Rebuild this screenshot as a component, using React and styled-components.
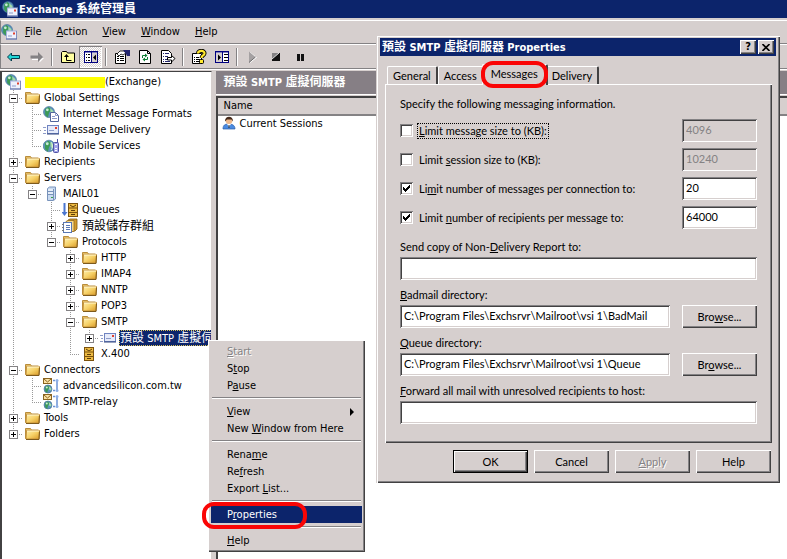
import React, { useState } from "react";
import styled, { createGlobalStyle, css } from "styled-components";

const face = "#d6cfce";
const shadow = "#848284";
const dark = "#424142";
const navy = "#0c246b";
const uiFont = '"DejaVu Sans Condensed", "Noto Sans", "Noto Sans CJK TC", sans-serif';
const dialogFont = 'Lato, "Liberation Sans", "Noto Sans CJK TC", sans-serif';

const GlobalStyle = createGlobalStyle`
  * {
    box-sizing: border-box;
  }

  body {
    margin: 0;
    overflow: hidden;
    font-family: ${uiFont};
    font-size: 11px;
    line-height: 16px;
    color: #000;
    background: #fff;
  }

  button, input {
    font: inherit;
    color: inherit;
    margin: 0;
    padding: 0;
    border: 0;
    border-radius: 0;
    background: none;
  }

  ul {
    list-style: none;
    margin: 0;
    padding: 0;
  }
`;

const raised = css`
  box-shadow: inset 1px 1px #fff, inset -1px -1px ${dark}, inset -2px -2px ${shadow};
`;

const sunken = css`
  box-shadow: inset 1px 1px ${shadow}, inset -1px -1px #fff, inset 2px 2px ${dark},
    inset -2px -2px ${face};
`;

/* ---------- main window ---------- */

const Window = styled.div`
  position: relative;
  display: flex;
  flex-direction: column;
  height: 100vh;
  background: ${face};
`;

const TitleBar = styled.header`
  display: flex;
  align-items: center;
  gap: 1px;
  height: 18px;
  padding-left: 2px;
  color: #fff;
  font-weight: bold;
  white-space: nowrap;
  background: ${navy};
`;

const MenuBar = styled.nav`
  display: flex;
  align-items: center;
  gap: 1px;
  height: 24px;
  margin-top: 2px;
  border-top: 1px solid #fff;
  border-left: 1px solid ${shadow};
  border-bottom: 1px solid ${shadow};
`;

const MenuButton = styled.button`
  height: 20px;
  padding: 0 7px;
`;

const ToolBar = styled.div`
  display: flex;
  align-items: center;
  height: 25px;
  padding-left: 1px;
  border-top: 1px solid #fff;
  border-left: 1px solid ${shadow};
  border-bottom: 1px solid ${shadow};
`;

const ToolButton = styled.button`
  display: flex;
  align-items: center;
  justify-content: center;
  width: 23px;
  height: 22px;
  ${(props) =>
    props.$pressed &&
    css`
      background: repeating-conic-gradient(#fff 0 25%, ${face} 0 50%) 0 0 / 2px 2px;
      box-shadow: inset 1px 1px ${shadow}, inset -1px -1px #fff;
    `}
`;

const ToolDivider = styled.span`
  width: 2px;
  height: 18px;
  margin: 0 3px;
  border-left: 1px solid ${shadow};
  border-right: 1px solid #fff;
`;

const Panes = styled.main`
  flex: 1;
  display: grid;
  grid-template-columns: 27% 1fr;
  gap: 4px;
  min-height: 0;
  padding-top: 1px;
  border-top: 1px solid #fff;
`;

const Han = styled.span`
  font-size: 12px;
`;

/* ---------- tree ---------- */

const TreePane = styled.div`
  overflow: hidden;
  padding: 2px 1px 0 2px;
  background: #fff;
  border-left: 2px solid ${dark};
  border-top: 1px solid ${dark};
  border-right: 1px solid ${face};
`;

const Row = styled.div`
  display: flex;
  height: 16px;
  white-space: nowrap;
`;

const vertical = "repeating-linear-gradient(#999 0 1px, transparent 1px 2px)";
const horizontal = "repeating-linear-gradient(to right, #999 0 1px, transparent 1px 2px)";
const guides = {
  blank: "none",
  line: `${vertical} 9px 0 / 1px 100% no-repeat`,
  tee: `${vertical} 9px 0 / 1px 100% no-repeat, ${horizontal} 9px 8px / 10px 1px no-repeat`,
  end: `${vertical} 9px 0 / 1px 8px no-repeat, ${horizontal} 9px 8px / 10px 1px no-repeat`,
};

const Guide = styled.span`
  flex: none;
  width: 19px;
  height: 16px;
  padding: 4px 5px;
  background: ${(props) => guides[props.$kind]};
`;

const Expander = styled.button`
  display: block;
  width: 9px;
  height: 9px;
  border: 1px solid ${shadow};
  background: ${(props) =>
      props.$open ? "none" : "linear-gradient(#000, #000) 3px 1px / 1px 5px no-repeat"},
    linear-gradient(#000, #000) 1px 3px / 5px 1px no-repeat, #fff;
`;

const NodeIcon = styled.span`
  display: flex;
  flex: none;
  width: 18px;
  padding-left: 1px;
`;

const NodeLabel = styled.span`
  padding: 0 1px;
  margin-left: 2px;
  ${(props) =>
    props.$selected &&
    css`
      color: #fff;
      background: ${navy};
      outline: 1px dotted #d9c25a;
      outline-offset: -1px;
    `}
`;

const Redacted = styled.span`
  display: inline-block;
  width: 80px;
  height: 11px;
  vertical-align: middle;
  background: #ff0;
`;

/* ---------- result list ---------- */

const ResultPane = styled.section`
  display: flex;
  flex-direction: column;
  overflow: hidden;
`;

const ResultTitle = styled.h1`
  height: 24px;
  margin: 0;
  padding-left: 7px;
  font-size: 11px;
  line-height: 23px;
  color: #fff;
  background: #867f85;
  border-bottom: 1px solid #fff;
`;

const ListArea = styled.div`
  flex: 1;
  margin-top: 1px;
  background: #fff;
  border-top: 2px solid ${dark};
  border-left: 2px solid ${dark};
`;

const ListTable = styled.table`
  width: 100%;
  border-collapse: collapse;

  th {
    height: 17px;
    padding: 0 5px;
    font-weight: normal;
    text-align: left;
    background: ${face};
    border-bottom: 2px solid ${shadow};
  }

  td {
    padding: 0 4px;
  }
`;

const CellContent = styled.span`
  display: flex;
  gap: 1px;
`;

/* ---------- context menu ---------- */

const ContextMenu = styled.div`
  position: absolute;
  left: 208px;
  top: 340px;
  width: 157px;
  padding: 3px;
  background: ${face};
  ${raised}
`;

const MenuItem = styled.button`
  display: flex;
  align-items: center;
  justify-content: space-between;
  width: 100%;
  height: 17px;
  padding: 0 8px 0 16px;
  white-space: nowrap;

  &:disabled {
    color: ${shadow};
    text-shadow: 1px 1px #fff;
  }

  ${(props) =>
    props.$active &&
    css`
      color: #fff;
      background: ${navy};
    `}
`;

const MenuLine = styled.hr`
  height: 2px;
  margin: 3px 1px 4px;
  border: 0;
  border-top: 1px solid ${shadow};
  border-bottom: 1px solid #fff;
`;

const Ring = styled.span`
  position: absolute;
  left: ${(props) => props.$left}px;
  top: ${(props) => props.$top}px;
  width: ${(props) => props.$width}px;
  height: 27px;
  border: 4px solid #fa0505;
  border-radius: 12px;
  pointer-events: none;
  z-index: 3;
`;

/* ---------- dialog ---------- */

const Dialog = styled.form`
  position: absolute;
  left: 376px;
  top: 35px;
  width: 404px;
  padding: 3px 4px 10px;
  font-family: ${dialogFont};
  line-height: 14px;
  background: ${face};
  box-shadow: inset 1px 1px ${face}, inset 2px 2px #fff, inset -1px -1px ${dark},
    inset -2px -2px ${shadow};
`;

const DialogTitle = styled.div`
  display: flex;
  align-items: center;
  height: 18px;
  padding: 0 2px;
  font-family: ${uiFont};
  font-weight: bold;
  color: #fff;
  background: ${navy};
`;

const DialogName = styled.span`
  flex: 1;
`;

const CaptionButton = styled.button`
  display: flex;
  align-items: center;
  justify-content: center;
  width: 16px;
  height: 14px;
  margin-left: 2px;
  color: #000;
  background: ${face};
  ${raised}
`;

const Tabs = styled.div`
  display: flex;
  align-items: flex-end;
  height: 28px;
  padding: 0 7px;
`;

const Tab = styled.button`
  position: relative;
  height: 18px;
  padding: 0 5px;
  background: ${face};
  border-top: 1px solid #fff;
  border-left: 1px solid #fff;
  border-right: 2px solid ${dark};
  border-radius: 2px 2px 0 0;

  ${(props) =>
    props.$selected &&
    css`
      height: 21px;
      margin: 0 -2px -1px;
      padding: 0 8px 3px;
      z-index: 1;
    `}
`;

const TabBody = styled.div`
  margin: 0 4px 7px 5px;
  padding: 13px 15px 19px;
  ${raised}
`;

const Intro = styled.p`
  margin: 0 0 8px;
`;

const LimitRow = styled.div`
  display: flex;
  align-items: center;
  margin-bottom: 6px;
`;

const CheckBox = styled.input`
  appearance: none;
  flex: none;
  width: 13px;
  height: 13px;
  padding: 3px;
  background: #fff;
  ${sunken}

  &:checked::before {
    content: "";
    display: block;
    width: 7px;
    height: 7px;
    background: #000;
    clip-path: polygon(
      0 2px, 1px 2px, 1px 3px, 2px 3px, 2px 4px, 3px 4px, 3px 3px, 4px 3px, 4px 2px, 5px 2px,
      5px 1px, 6px 1px, 6px 0, 7px 0, 7px 3px, 6px 3px, 6px 4px, 5px 4px, 5px 5px, 4px 5px,
      4px 6px, 3px 6px, 3px 7px, 2px 7px, 2px 6px, 1px 6px, 1px 5px, 0 5px
    );
  }
`;

const LimitLabel = styled.label`
  margin-left: 4px;
  padding: 0 1px;
  border: 1px ${(props) => (props.$focused ? "dotted #000" : "solid transparent")};
`;

const TextBox = styled.input`
  flex: 1;
  width: 100%;
  min-width: 0;
  height: 23px;
  padding: 0 4px 3px;
  background: #fff;
  ${sunken}

  &:disabled {
    color: ${shadow};
    background: ${face};
  }
`;

const NumberBox = styled(TextBox)`
  flex: none;
  width: 75px;
  margin-left: auto;
`;

const Field = styled.div`
  margin-top: 8px;

  label {
    display: block;
    margin-bottom: 3px;
  }
`;

const Fields = styled.div`
  margin-top: 11px;
`;

const FieldRow = styled.div`
  display: flex;
  gap: 12px;
`;

const PushButton = styled.button`
  width: 75px;
  height: 23px;
  background: ${face};
  ${raised}

  ${(props) =>
    props.$primary &&
    css`
      border: 1px solid #000;
    `}

  &:disabled {
    color: ${shadow};
    text-shadow: 1px 1px #fff;
  }
`;

const DialogButtons = styled.div`
  display: flex;
  justify-content: flex-end;
  gap: 6px;
  padding-right: 5px;
`;

/* ---------- icons ---------- */

const Svg = ({ children }) => (
  <svg width="16" height="16" viewBox="0 0 16 16" aria-hidden="true">
    {children}
  </svg>
);

const Globe = ({ cx, cy, r }) => (
  <g>
    <circle cx={cx} cy={cy} r={r} fill="#5d93bd" stroke="#3d6b8f" strokeWidth=".6" />
    <path
      d={`M${cx - r * 0.7} ${cy - r * 0.5}l${r * 0.6}-${r * 0.4} ${r * 0.5} ${r * 0.4}-${r * 0.4} ${r * 0.7}-${r * 0.2} ${r * 0.8}-${r * 0.5}-${r * 0.5}z`}
      fill="#3c9a56"
    />
    <path
      d={`M${cx + r * 0.2} ${cy - r * 0.7}l${r * 0.6} ${r * 0.5}v${r * 0.6}l-${r * 0.5}-${r * 0.2}z`}
      fill="#a4dca8"
    />
    <circle cx={cx - r * 0.3} cy={cy - r * 0.4} r={r * 0.25} fill="#c9ecd8" />
  </g>
);

const Envelope = ({ x, y }) => (
  <g>
    <rect x={x + 0.5} y={y + 0.5} width="10" height="8" fill="#eef1fc" stroke="#a5b0dc" />
    <path d={`M${x + 2} ${y + 5.5}h4`} stroke="#8d9bc9" />
    <rect x={x + 7} y={y + 2} width="2" height="2" fill="#e0402e" />
    <path d={`M${x} ${y + 8.5}h11v-8`} fill="none" stroke="#5a6aa0" />
  </g>
);

const ExchangeIcon = () => (
  <Svg>
    <Globe cx={6} cy={6} r={5.5} />
    <Envelope x={5} y={6.5} />
  </Svg>
);

const FolderIcon = () => (
  <Svg>
    <defs>
      <linearGradient id="folder" x1="0" y1="0" x2="1" y2="1">
        <stop offset="0" stopColor="#fff0ae" />
        <stop offset=".5" stopColor="#f6d168" />
        <stop offset="1" stopColor="#d99a26" />
      </linearGradient>
    </defs>
    <path d="M1.500 12.500V2.500h5l1 1.500h7v8z" fill="#e3bb62" stroke="#b98d3c" />
    <path d="M2.500 4.500h13l-.5 8.500H2z" fill="url(#folder)" stroke="#c4913a" />
    <path d="M2 13.500H15l.5-8" fill="none" stroke="#7d5a1c" />
    <path d="M3 5h12" stroke="#fff7d0" />
  </Svg>
);

const FormatsIcon = () => (
  <Svg>
    <Globe cx={6} cy={6} r={5.5} />
    <path d="M7.500 6.500h5l3 3v6h-8z" fill="#fff" stroke="#52659b" />
    <path d="M12.500 6.500v3h3M9 10.500h3M9 12.500h5" fill="none" stroke="#8d9bc9" />
  </Svg>
);

const DeliveryIcon = () => (
  <Svg>
    <path d="M0 5.500h3M1 8.500h2M0 11.500h3" stroke="#8d9bc9" />
    <rect x="4.500" y="3.500" width="11" height="8" fill="#e6ebfa" stroke="#6f83c0" />
    <path d="M6 8.500h5" stroke="#8d9bc9" />
    <rect x="12" y="5" width="2" height="2" fill="#e0402e" />
    <path d="M4 12h12" stroke="#33477f" />
  </Svg>
);

const MobileIcon = () => (
  <Svg>
    <Globe cx={6} cy={8} r={5.8} />
    <path d="M8 4c2 2 2 6 0 8" fill="none" stroke="#d9f2d9" />
    <rect x="10.500" y="4.500" width="5" height="10" rx="1" fill="#a3a5e8" stroke="#5053a5" />
    <path d="M14.500 1v4" stroke="#5053a5" />
    <path d="M12 6.500h2M12 10.500h2M12 12.500h2" stroke="#fff" />
  </Svg>
);

const ServerIcon = () => (
  <Svg>
    <path d="M4.500 2.500l2-1.500h6v12l-2 1.500h-6z" fill="#c9daf0" stroke="#7893bb" />
    <path d="M10.500 3v11" stroke="#7893bb" />
    <path d="M5 5.500h5M5 8.500h5" stroke="#7893bb" />
    <path d="M5 4h5M5 7h5" stroke="#fff" />
    <rect x="8" y="11" width="2" height="1" fill="#38a048" />
  </Svg>
);

const Cabinet = ({ x }) => (
  <g>
    <rect x={x + 0.5} y="1.500" width="9" height="13" fill="#edbb43" stroke="#7b520e" />
    <path d={`M${x} 6h10M${x} 10.500h10`} stroke="#7b520e" />
    <path d={`M${x + 2} 3l3 2 3-2M${x + 3} 8.500h4M${x + 3} 12.500h4`} fill="none" stroke="#5c3c08" />
  </g>
);

const QueuesIcon = () => (
  <Svg>
    <path d="M1.500 1h2v9h2l-3 4-3-4h2z" fill="#4b76cf" />
    <Cabinet x={6} />
  </Svg>
);

const CabinetIcon = () => (
  <Svg>
    <Cabinet x={3} />
  </Svg>
);

const StorageIcon = () => (
  <Svg>
    <path d="M6 2l2-1h7v10l-2 2H6z" fill="#d39a2c" stroke="#835a12" strokeWidth=".8" />
    <path d="M4 3.500l2-1h6v11H4z" fill="#f7d88a" stroke="#946a1c" strokeWidth=".8" />
    <rect x="1.500" y="4.500" width="8" height="10" fill="#fff" stroke="#5a78b4" />
    <path d="M4 7.500h4M4 9.500h4M4 11.500h4" stroke="#5a78b4" />
    <path d="M0 6.500h2M0 9.500h2M0 12.500h2" stroke="#777" />
  </Svg>
);

const ConnectorIcon = () => (
  <Svg>
    <rect x=".5" y=".5" width="8" height="5" fill="#fae2a6" stroke="#8b6420" />
    <path d="M1 1l3.500 3L8 1" fill="none" stroke="#8b6420" />
    <Globe cx={5} cy={11} r={4} />
    <path d="M10 2.500h2M10 12.500h2M14 3v9" fill="none" stroke="#6b93d6" strokeWidth="1.500" />
    <circle cx="14" cy="2.500" r="1.500" fill="#8fb0e6" />
    <circle cx="14" cy="12.500" r="1.500" fill="#8fb0e6" />
  </Svg>
);

const UserIcon = () => (
  <Svg>
    <path d="M1 13c0-4 2-5 5.500-5s6.500 1 6.500 5z" fill="#4a8ae0" stroke="#2a5da8" strokeWidth=".7" />
    <path d="M5 8l2 3 2-3z" fill="#fff" />
    <path d="M7 9v3" stroke="#333" />
    <circle cx="7" cy="4.800" r="3.200" fill="#f0b98a" />
    <path d="M3 5.500c-.5-6.500 8.500-6.500 8 0l-1.500-2H5z" fill="#44281a" />
  </Svg>
);

const BackIcon = () => (
  <Svg>
    <path d="M1.500 8l4-4v2.500h8v3h-8V12z" fill="#1fd6d6" stroke="#063c4c" />
  </Svg>
);

const ForwardIcon = () => (
  <Svg>
    <path d="M15 9l-4.500 4.500V11H3v-1z" fill="#fff" />
    <path d="M14 8L9 3v3.500H1.500v3H9V13z" fill="#848284" />
  </Svg>
);

const UpIcon = () => (
  <Svg>
    <path d="M1.500 13.500v-10l1-1h4l1 1.500h7v9.500z" fill="#ffffa0" stroke="#000" />
    <path d="M6.500 6v5.500h5" fill="none" stroke="#000" />
    <path d="M6.500 5l2.500 3H4z" fill="#000" />
  </Svg>
);

const TreeToggleIcon = () => (
  <Svg>
    <rect x="1.500" y="2.500" width="13" height="11" fill="#fff" stroke="#000080" />
    <path d="M1 3h14M8.500 3v10" stroke="#000080" />
    <path d="M3 5.500h1M5 5.500h2M3 8.500h1M5 8.500h2M3 11.500h1M5 11.500h2" stroke="#000" />
    <rect x="9" y="4" width="5" height="9" fill="#d6cfce" />
    <path d="M13 5.500v6L10 8.500z" fill="#000" />
  </Svg>
);

const PropsIcon = () => (
  <Svg>
    <path d="M1.500 4.500h10v10h-10z" fill="#fff" stroke="#000" />
    <path d="M3 7.500h2M6 7.500h4M3 9.500h2M6 9.500h4M3 11.500h2M6 11.500h4" stroke="#000" />
    <path d="M3 5l3-3h4l2 2-3 2-2-1-2 2z" fill="#fff" stroke="#000" strokeWidth=".8" />
    <path d="M9 1h7v6h-3l-1-2z" fill="#23256f" />
  </Svg>
);

const RefreshIcon = () => (
  <Svg>
    <path d="M2.500 1.500h8l3 3v10h-11z" fill="#fff" stroke="#000" />
    <path d="M10.500 1.500v3h3" fill="none" stroke="#000" />
    <path d="M5.500 9V6.500h3M10.500 8v2.500h-3" fill="none" stroke="#0a7d32" />
    <path d="M8 4.500l2.500 2L8 8.500zM8 8.500l-2.500 2L8 12.500z" fill="#0a7d32" />
  </Svg>
);

const ExportIcon = () => (
  <Svg>
    <path d="M1.500 1.500h7l3 3v10h-10z" fill="#fff" stroke="#000" />
    <path
      d="M3 4.500h1M5 4.500h4M3 7.500h1M5 7.500h3M3 10.500h1M5 10.500h3M3 12.500h1M5 12.500h5"
      stroke="#23256f"
    />
    <path d="M7.500 8.500h4v-2l3.500 3-3.500 3.500v-2h-4z" fill="#fff" stroke="#000" />
  </Svg>
);

const HelpIcon = () => (
  <Svg>
    <path d="M1.500 4.500h9v10h-9z" fill="#fff" stroke="#000" />
    <path d="M3 8.500h1M5 8.500h3M3 10.500h1M5 10.500h4M3 12.500h1M5 12.500h4" stroke="#000" />
    <path
      d="M7 4.500C7 1 14 1 13.500 4.500 13.500 6.500 10.500 6.500 10.500 9"
      fill="none"
      stroke="#000"
      strokeWidth="4"
    />
    <path
      d="M7 4.500C7 1 14 1 13.500 4.500 13.500 6.500 10.500 6.500 10.500 9"
      fill="none"
      stroke="#ffe92e"
      strokeWidth="2.200"
    />
    <rect x="8.500" y="10.500" width="4" height="4" rx="1" fill="#ffe92e" stroke="#000" />
  </Svg>
);

const ActionPaneIcon = () => (
  <Svg>
    <rect x="1.500" y="2.500" width="13" height="11" fill="#fff" stroke="#000080" />
    <path d="M1 3h14M8.500 3v10" stroke="#000080" />
    <rect x="2" y="4" width="6" height="9" fill="#d6cfce" />
    <path d="M4 5.500v6l3-3z" fill="#000" />
    <path d="M10 5.500h4M10 8.500h4M10 11.500h4" stroke="#000" />
  </Svg>
);

const PlayIcon = () => (
  <Svg>
    <path d="M5 3v11l7-5.500z" fill="#fff" />
    <path d="M4 2.500v11L10.500 8z" fill="#a5a1a2" />
    <path d="M4 13.500L10.500 8" stroke="#6b696a" />
  </Svg>
);

const StopIcon = () => (
  <Svg>
    <rect x="4" y="4" width="8" height="8" fill="#111" />
    <path d="M4 4h7l-7 6z" fill="#848284" />
    <path d="M4 10l7-6" stroke="#ddd" />
  </Svg>
);

const PauseIcon = () => (
  <Svg>
    <path d="M6 5h3v7H6zM10 5h3v7h-3z" fill="#111" />
  </Svg>
);

/* ---------- data ---------- */

const serverName = (
  <>
    <Han>預設</Han> SMTP <Han>虛擬伺服器</Han>
  </>
);

const tree = [
  {
    label: "Global Settings",
    icon: FolderIcon,
    children: [
      { label: "Internet Message Formats", icon: FormatsIcon },
      { label: "Message Delivery", icon: DeliveryIcon },
      { label: "Mobile Services", icon: MobileIcon },
    ],
  },
  { label: "Recipients", icon: FolderIcon, closed: true },
  {
    label: "Servers",
    icon: FolderIcon,
    children: [
      {
        label: "MAIL01",
        icon: ServerIcon,
        children: [
          { label: "Queues", icon: QueuesIcon },
          { label: <Han>預設儲存群組</Han>, icon: StorageIcon, closed: true },
          {
            label: "Protocols",
            icon: FolderIcon,
            children: [
              { label: "HTTP", icon: FolderIcon, closed: true },
              { label: "IMAP4", icon: FolderIcon, closed: true },
              { label: "NNTP", icon: FolderIcon, closed: true },
              { label: "POP3", icon: FolderIcon, closed: true },
              {
                label: "SMTP",
                icon: FolderIcon,
                children: [
                  { label: serverName, icon: DeliveryIcon, closed: true, selected: true },
                ],
              },
              { label: "X.400", icon: CabinetIcon },
            ],
          },
        ],
      },
    ],
  },
  {
    label: "Connectors",
    icon: FolderIcon,
    children: [
      { label: "advancedsilicon.com.tw", icon: ConnectorIcon },
      { label: "SMTP-relay", icon: ConnectorIcon },
    ],
  },
  { label: "Tools", icon: FolderIcon, closed: true },
  { label: "Folders", icon: FolderIcon, closed: true },
];

const tools = [
  { name: "Back", icon: BackIcon },
  { name: "Forward", icon: ForwardIcon },
  null,
  { name: "Up one level", icon: UpIcon },
  { name: "Show console tree", icon: TreeToggleIcon, pressed: true },
  null,
  { name: "Item properties", icon: PropsIcon },
  { name: "Reload", icon: RefreshIcon },
  { name: "Export", icon: ExportIcon },
  null,
  { name: "Help topics", icon: HelpIcon },
  { name: "Show action pane", icon: ActionPaneIcon },
  null,
  { name: "Start item", icon: PlayIcon },
  { name: "Stop item", icon: StopIcon },
  { name: "Pause item", icon: PauseIcon },
];

const contextItems = [
  { label: "&Start", disabled: true },
  { label: "S&top" },
  { label: "P&ause" },
  null,
  { label: "&View", submenu: true },
  { label: "New &Window from Here" },
  null,
  { label: "Rena&me" },
  { label: "Re&fresh" },
  { label: "Export &List..." },
  null,
  { label: "P&roperties", active: true },
  null,
  { label: "&Help" },
];

const limits = [
  { id: "size", label: "&Limit message size to (KB):", value: "4096", focused: true },
  { id: "session", label: "Limit &session size to (KB):", value: "10240" },
  { id: "messages", label: "Li&mit number of messages per connection to:", value: "20", on: true },
  { id: "recipients", label: "Limit &number of recipients per message to:", value: "64000", on: true },
];

// "&" marks the letter that is the keyboard shortcut
const Hot = ({ text }) => {
  const at = text.indexOf("&");
  if (at < 0) return <span>{text}</span>;
  return (
    <span>
      {text.slice(0, at)}
      <u>{text[at + 1]}</u>
      {text.slice(at + 2)}
    </span>
  );
};

const TreeNode = ({ node, trail, last }) => {
  const [open, setOpen] = useState(!node.closed);
  const Icon = node.icon;

  return (
    <li>
      <Row>
        {trail.map((kind, i) => (
          <Guide key={i} $kind={kind} />
        ))}
        <Guide $kind={last ? "end" : "tee"}>
          {(node.children || node.closed) && (
            <Expander type="button" $open={open} aria-expanded={open} onClick={() => setOpen(!open)} />
          )}
        </Guide>
        <NodeIcon>
          <Icon />
        </NodeIcon>
        <NodeLabel $selected={node.selected}>{node.label}</NodeLabel>
      </Row>
      {open && node.children && (
        <TreeList nodes={node.children} trail={[...trail, last ? "blank" : "line"]} />
      )}
    </li>
  );
};

const TreeList = ({ nodes, trail = [] }) => (
  <ul>
    {nodes.map((node, i) => (
      <TreeNode key={i} node={node} trail={trail} last={i === nodes.length - 1} />
    ))}
  </ul>
);

const LimitField = ({ limit }) => {
  const [on, setOn] = useState(Boolean(limit.on));

  return (
    <LimitRow>
      <CheckBox
        type="checkbox"
        id={limit.id}
        checked={on}
        onChange={(event) => setOn(event.target.checked)}
      />
      <LimitLabel id={`${limit.id}-label`} htmlFor={limit.id} $focused={limit.focused}>
        <Hot text={limit.label} />
      </LimitLabel>
      <NumberBox
        aria-labelledby={`${limit.id}-label`}
        defaultValue={limit.value}
        disabled={!on}
      />
    </LimitRow>
  );
};

const PathField = ({ id, label, value = "", browse }) => (
  <Field>
    <label htmlFor={id}>
      <Hot text={label} />
    </label>
    <FieldRow>
      <TextBox id={id} defaultValue={value} />
      {browse && (
        <PushButton type="button">
          <Hot text={browse} />
        </PushButton>
      )}
    </FieldRow>
  </Field>
);

const PropertiesDialog = () => (
  <Dialog onSubmit={(event) => event.preventDefault()}>
    <DialogTitle>
      <DialogName>{serverName} Properties</DialogName>
      <CaptionButton type="button">?</CaptionButton>
      <CaptionButton type="button" aria-label="Close">
        <svg width="8" height="7" viewBox="0 0 8 7">
          <path d="M.5 0l7 7M7.500 0l-7 7" stroke="#000" strokeWidth="1.600" />
        </svg>
      </CaptionButton>
    </DialogTitle>
    <Tabs>
      <Tab type="button">General</Tab>
      <Tab type="button">Access</Tab>
      <Tab type="button" $selected>
        Messages
      </Tab>
      <Tab type="button">Delivery</Tab>
    </Tabs>
    <TabBody>
      <Intro>Specify the following messaging information.</Intro>
      {limits.map((limit) => (
        <LimitField key={limit.id} limit={limit} />
      ))}
      <Fields>
        <PathField id="ndr" label="Send copy of Non-&Delivery Report to:" />
        <PathField
          id="badmail"
          label="&Badmail directory:"
          value="C:\Program Files\Exchsrvr\Mailroot\vsi 1\BadMail"
          browse="Bro&wse..."
        />
        <PathField
          id="queue"
          label="&Queue directory:"
          value="C:\Program Files\Exchsrvr\Mailroot\vsi 1\Queue"
          browse="Br&owse..."
        />
        <PathField id="forward" label="&Forward all mail with unresolved recipients to host:" />
      </Fields>
    </TabBody>
    <DialogButtons>
      <PushButton $primary>OK</PushButton>
      <PushButton type="button">Cancel</PushButton>
      <PushButton type="button" disabled>
        <Hot text="&Apply" />
      </PushButton>
      <PushButton type="button">Help</PushButton>
    </DialogButtons>
    <Ring $left={105} $top={26} $width={67} />
  </Dialog>
);

const App = () => (
  <>
    <GlobalStyle />
    <Window>
      <TitleBar>
        <ExchangeIcon />
        <span>
          Exchange <Han>系統管理員</Han>
        </span>
      </TitleBar>
      <MenuBar>
        <ExchangeIcon />
        {["&File", "&Action", "&View", "&Window", "&Help"].map((text) => (
          <MenuButton key={text}>
            <Hot text={text} />
          </MenuButton>
        ))}
      </MenuBar>
      <ToolBar>
        {tools.map((tool, i) =>
          tool ? (
            <ToolButton key={i} aria-label={tool.name} $pressed={tool.pressed}>
              <tool.icon />
            </ToolButton>
          ) : (
            <ToolDivider key={i} />
          )
        )}
      </ToolBar>
      <Panes>
        <TreePane>
          <Row>
            <NodeIcon>
              <ExchangeIcon />
            </NodeIcon>
            <NodeLabel>
              <Redacted />
              (Exchange)
            </NodeLabel>
          </Row>
          <TreeList nodes={tree} />
        </TreePane>
        <ResultPane>
          <ResultTitle>{serverName}</ResultTitle>
          <ListArea>
            <ListTable>
              <thead>
                <tr>
                  <th>Name</th>
                </tr>
              </thead>
              <tbody>
                <tr>
                  <td>
                    <CellContent>
                      <UserIcon />
                      Current Sessions
                    </CellContent>
                  </td>
                </tr>
              </tbody>
            </ListTable>
          </ListArea>
        </ResultPane>
      </Panes>
      <ContextMenu>
        {contextItems.map((item, i) =>
          item ? (
            <MenuItem key={i} disabled={item.disabled} $active={item.active}>
              <Hot text={item.label} />
              {item.submenu && (
                <svg width="4" height="8" viewBox="0 0 4 8">
                  <path d="M0 0l4 4-4 4z" fill="#000" />
                </svg>
              )}
            </MenuItem>
          ) : (
            <MenuLine key={i} />
          )
        )}
        <Ring $left={-6} $top={162} $width={105} />
      </ContextMenu>
      <PropertiesDialog />
    </Window>
  </>
);

export default App;
